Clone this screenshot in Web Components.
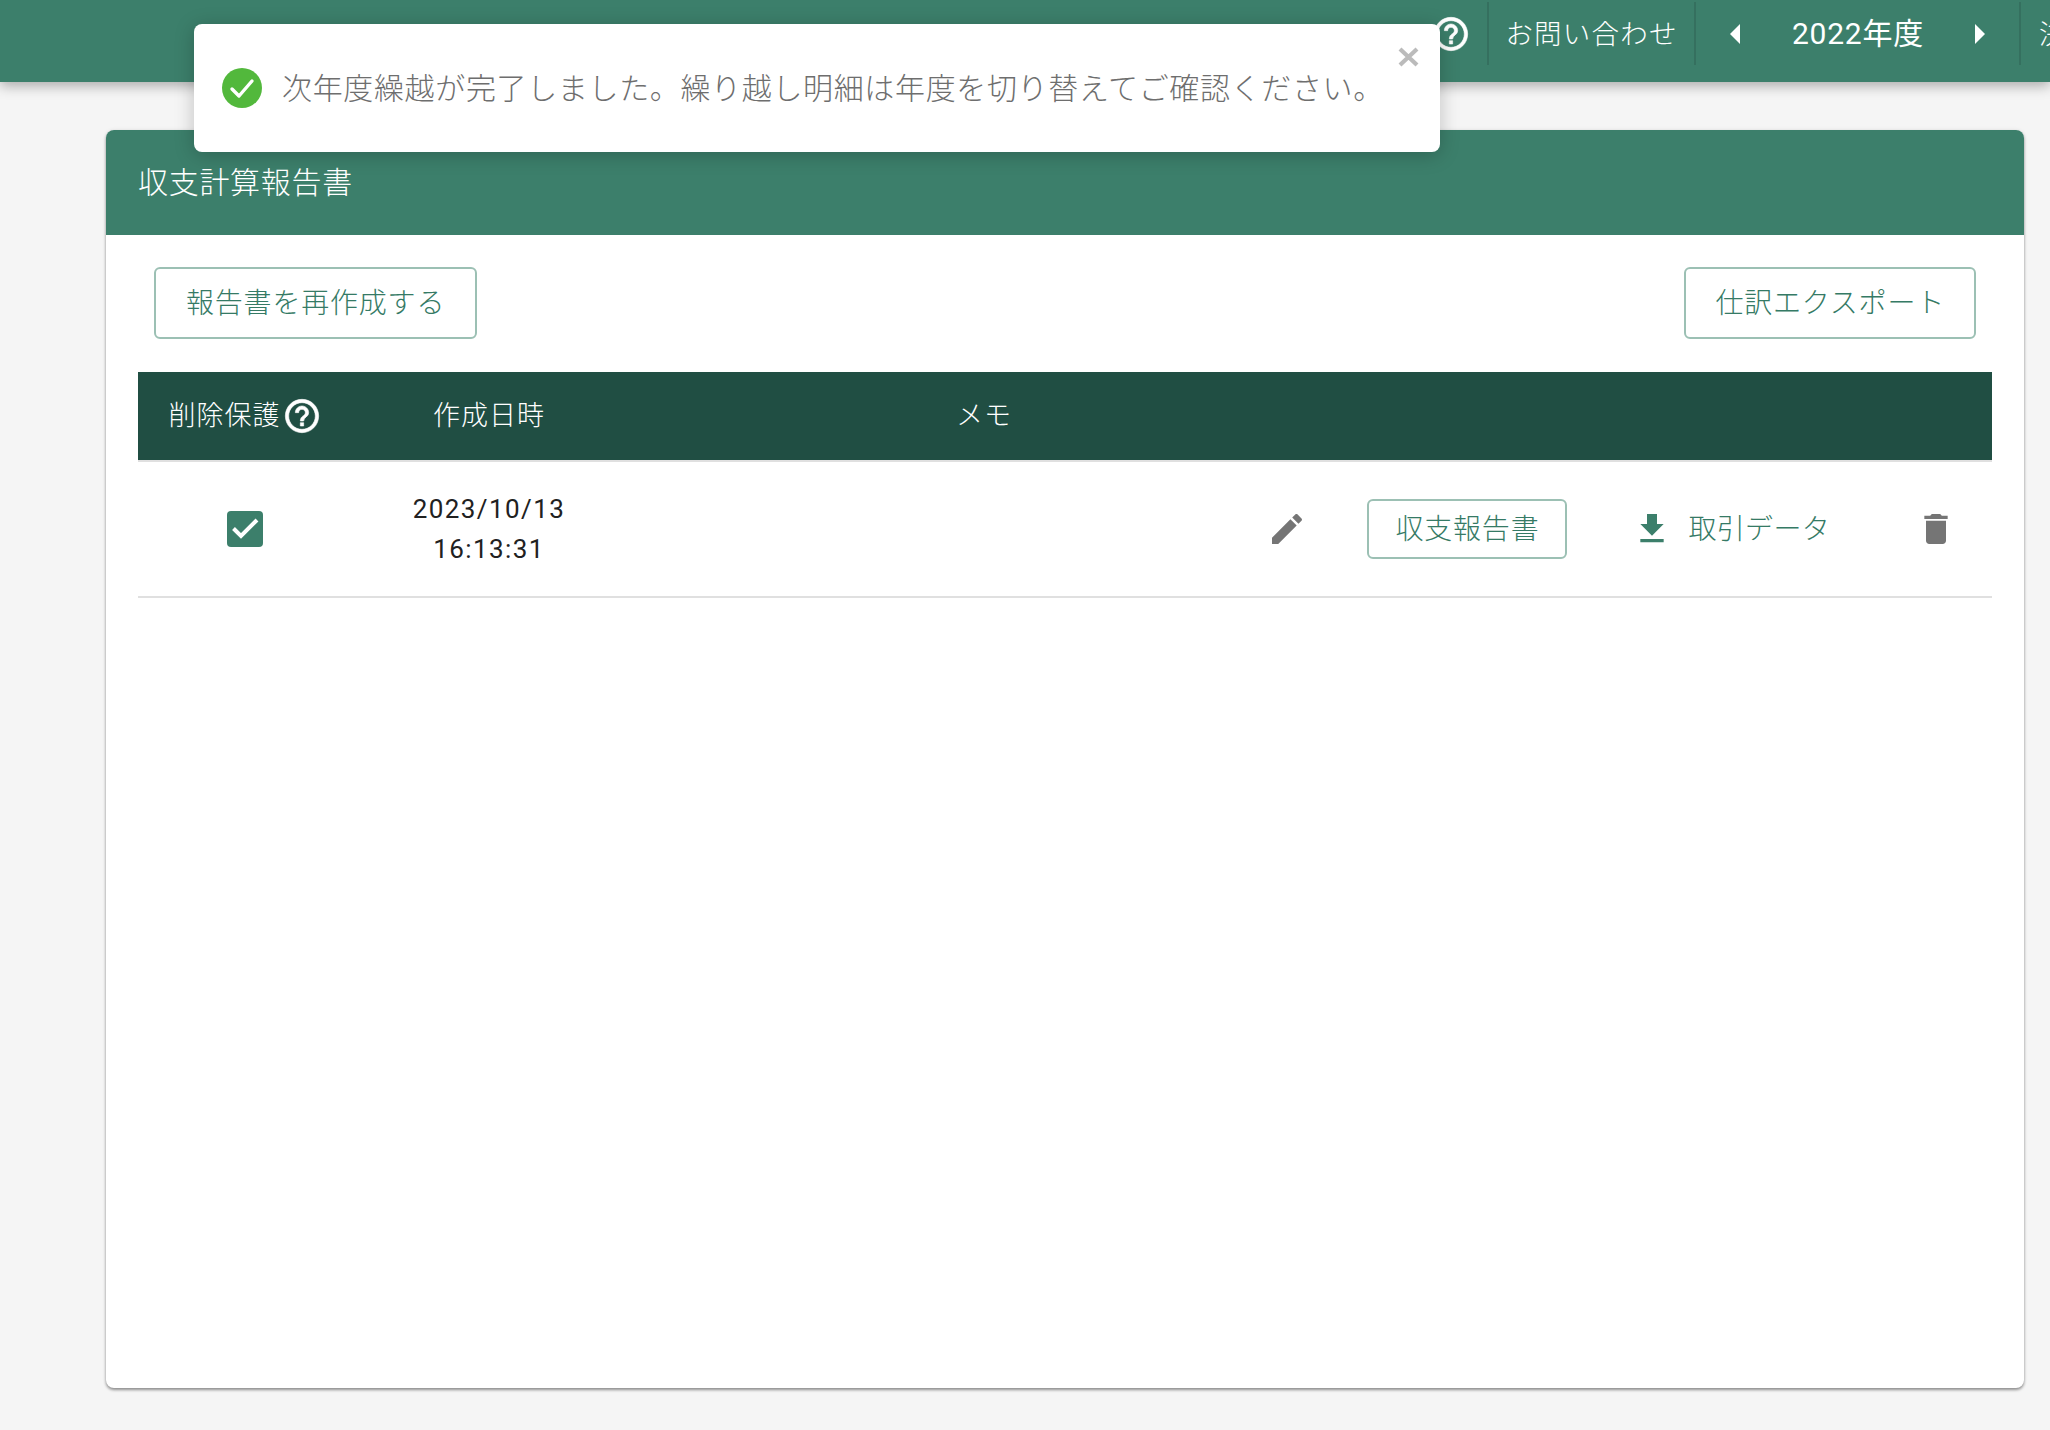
<!DOCTYPE html>
<html lang="ja"><head><meta charset="utf-8"><title>収支計算報告書</title>
<style>
html,body{margin:0;padding:0;height:100%;overflow:hidden}
body{background:#f5f5f5;font-family:Roboto,"Noto Sans CJK JP",sans-serif;font-size:26px;color:#212121}
</style></head><body>
<x-app-bar>
  <x-bar-item kind="icon"><x-icon name="help" size="40" bold></x-icon></x-bar-item>
  <x-bar-item>お問い合わせ</x-bar-item>
  <x-year-switch>2022年度</x-year-switch>
  <x-bar-item kind="clip">決算</x-bar-item>
</x-app-bar>
<x-toast>次年度繰越が完了しました。繰り越し明細は年度を切り替えてご確認ください。</x-toast>
<x-page>
  <x-card heading="収支計算報告書">
    <x-toolbar>
      <x-btn size="lg" pad="30">報告書を再作成する</x-btn>
      <x-btn size="lg">仕訳エクスポート</x-btn>
    </x-toolbar>
    <x-report-table></x-report-table>
  </x-card>
</x-page>
<template id="tpl-table">
<style>
:host{display:block;margin-top:33px}
.row{display:grid;grid-template-columns:214px 274px 1fr;align-items:center}
.head{height:88px;background:#204e43;color:#fff;border-bottom:2px solid #e0e0e0;font-size:27px;letter-spacing:1px;font-weight:300}
.head>div{display:flex;align-items:center;justify-content:center}
.head span{position:relative;top:-3px}
.head x-icon{margin-left:1px}
.head>div:first-child{padding-right:0}
.head .memo{justify-content:flex-start;padding-left:330px}
.body{height:134px;border-bottom:2px solid #e0e0e0;color:#212121}
.check{display:flex;justify-content:center}
.date{text-align:center;line-height:40px;letter-spacing:1.4px}
.acts{display:flex;align-items:center;height:100%;padding-right:36px;justify-content:flex-end}
.edit{margin-right:60px}
.dl{display:flex;align-items:center;color:#357a65;margin:0 86px 0 65px;font-size:28px;letter-spacing:.3px;font-weight:300}
.dl x-icon{margin-right:16px}
.dl span{margin-top:-4px}
</style>
<div class="row head"><div><span>削除保護</span><x-icon name="help" size="40" bold></x-icon></div><div><span>作成日時</span></div><div class="memo"><span>メモ</span></div></div>
<div class="row body">
  <div class="check"><x-checkbox></x-checkbox></div>
  <div class="date">2023/10/13<br>16:13:31</div>
  <div class="acts">
    <x-icon class="edit" name="pencil" size="40" color="#757575"></x-icon>
    <x-btn size="md">収支報告書</x-btn>
    <div class="dl"><x-icon name="download" size="40" color="#3c7f6b"></x-icon><span>取引データ</span></div>
    <x-icon name="trash" size="40" color="#757575"></x-icon>
  </div>
</div>
</template>
<script>
const P={help:'M11 18h2v-2h-2v2zm1-16C6.48 2 2 6.48 2 12s4.48 10 10 10 10-4.48 10-10S17.52 2 12 2zm0 18c-4.41 0-8-3.59-8-8s3.59-8 8-8 8 3.59 8 8-3.59 8-8 8zm0-14c-2.21 0-4 1.79-4 4h2c0-1.1.9-2 2-2s2 .9 2 2c0 2-3 1.75-3 5h2c0-2.25 3-2.5 3-5 0-2.21-1.79-4-4-4z',
pencil:'M3 17.25V21h3.75L17.81 9.94l-3.75-3.75L3 17.25zM20.71 7.04c.39-.39.39-1.02 0-1.41l-2.34-2.34c-.39-.39-1.02-.39-1.41 0l-1.83 1.83 3.75 3.75 1.83-1.83z',
download:'M19 9h-4V3H9v6H5l7 7 7-7zM5 18v2h14v-2H5z',
trash:'M6 19c0 1.1.9 2 2 2h8c1.1 0 2-.9 2-2V7H6v12zM19 4h-3.5l-1-1h-5l-1 1H5v2h14V4z'};
function def(name,html,init){customElements.define(name,class extends HTMLElement{connectedCallback(){if(this.shadowRoot)return;const r=this.attachShadow({mode:'open'});r.innerHTML=typeof html==='function'?html(this):html;init&&init(r,this)}})}
def('x-icon',h=>{const s=h.getAttribute('size')||24,c=h.getAttribute('color')||'currentColor',b=h.hasAttribute('bold')?` stroke="${c}" stroke-width=".35"`:'';return `<style>:host{display:inline-flex;flex:none;width:${s}px;height:${s}px}svg{display:block}</style><svg width="${s}" height="${s}" viewBox="0 0 24 24" fill="${c}"${b}><path d="${P[h.getAttribute('name')]}"/></svg>`});
def('x-app-bar',`<style>:host{display:block;position:relative;z-index:2;height:82px;background:#3c7f6b;color:#fff;box-shadow:0 4px 12px rgba(0,0,0,.3)}
.in{display:flex;height:100%;overflow:hidden;padding-left:1431px;box-sizing:border-box;white-space:nowrap;align-items:flex-start}</style><div class="in"><slot></slot></div>`);
def('x-bar-item',h=>{const k=h.getAttribute('kind');const css=k==='icon'?'width:58px;justify-content:flex-start':k==='clip'?'padding-left:18px;border:0':'width:207px;justify-content:center';return `<style>:host{display:flex;flex:none;align-items:center;height:63px;margin-top:2px;box-sizing:border-box;border-right:2px solid #35705f;font-size:27.5px;letter-spacing:1.2px;font-weight:300;${css}}span{margin-top:-3px}</style><span style="${k==='icon'?'margin:0;display:flex':''}"><slot></slot></span>`});
def('x-year-switch',`<style>:host{display:flex;flex:none;align-items:center;height:63px;margin-top:2px;width:325px;box-sizing:border-box;border-right:2px solid #35705f;font-size:30px;letter-spacing:.8px;padding:0 33px 0 34px;justify-content:space-between}svg{display:block}span{margin-top:-6px}</style><svg width="11" height="20" viewBox="0 0 11 20" fill="#fff"><path d="M10 0v20L0 10z"/></svg><span><slot></slot></span><svg width="11" height="20" viewBox="0 0 11 20" fill="#fff"><path d="M0 0v20l10-10z"/></svg>`);
def('x-toast',`<style>:host{position:absolute;z-index:5;left:194px;top:24px;width:1246px;height:128px;box-sizing:border-box;background:#fff;border-radius:8px;display:flex;align-items:center;padding:0 28px;box-shadow:0 3px 20px rgba(0,0,0,.22);color:#6e6e6e;font-size:30px;letter-spacing:.65px;font-weight:300;white-space:nowrap}
.ok{flex:none;margin-right:20px;display:block}.x{position:absolute;right:21px;top:23px;display:block}.t{margin-top:-4px}</style>
<svg class="ok" width="40" height="40" viewBox="0 0 40 40"><circle cx="20" cy="20" r="20" fill="#52b83c"/><path d="M10 21l7 7 13-15" fill="none" stroke="#fff" stroke-width="3.4" stroke-linecap="round" stroke-linejoin="round"/></svg><span class="t"><slot></slot></span>
<svg class="x" width="21" height="20" viewBox="0 0 21 20"><path d="M2 2l17 16M19 2L2 18" stroke="#bbb" stroke-width="4.2" fill="none"/></svg>`);
def('x-page',`<style>:host{display:block;padding:48px 26px 0 106px}</style><slot></slot>`);
def('x-card',h=>`<style>:host{display:block;height:1258px;background:#fff;border-radius:8px;overflow:hidden;box-shadow:0 2px 3px rgba(0,0,0,.4),0 0 4px rgba(0,0,0,.08)}
.h{height:105px;background:#3c7f6b;color:#fff;display:flex;align-items:center;padding:0 32px 6px;box-sizing:border-box;font-size:30px;letter-spacing:.7px;font-weight:300}.b{padding:32px 32px}</style><div class="h">${h.getAttribute('heading')}</div><div class="b"><slot></slot></div>`);
def('x-toolbar',`<style>:host{display:flex;justify-content:space-between;padding:0 16px}</style><slot></slot>`);
def('x-btn',h=>{const lg=h.getAttribute('size')==='lg',p=h.getAttribute('pad')||(lg?29:26);return `<style>:host{display:inline-flex;align-items:center;justify-content:center;flex:none;box-sizing:border-box;height:${lg?72:60}px;padding:0 ${p}px 4px;border:2px solid #9cc0b4;border-radius:6px;color:#357a65;font-size:28px;letter-spacing:.8px;font-weight:300;background:#fff;white-space:nowrap}</style><slot></slot>`});
def('x-checkbox',`<style>:host{display:block;width:36px;height:36px;border-radius:4px;background:#3c7f6b}svg{display:block}</style><svg width="36" height="36" viewBox="0 0 36 36"><path d="M6.5 17.5l7.5 7.5L30 9" fill="none" stroke="#fff" stroke-width="4"/></svg>`);
def('x-report-table',document.getElementById('tpl-table').innerHTML);
</script>
</body></html>
